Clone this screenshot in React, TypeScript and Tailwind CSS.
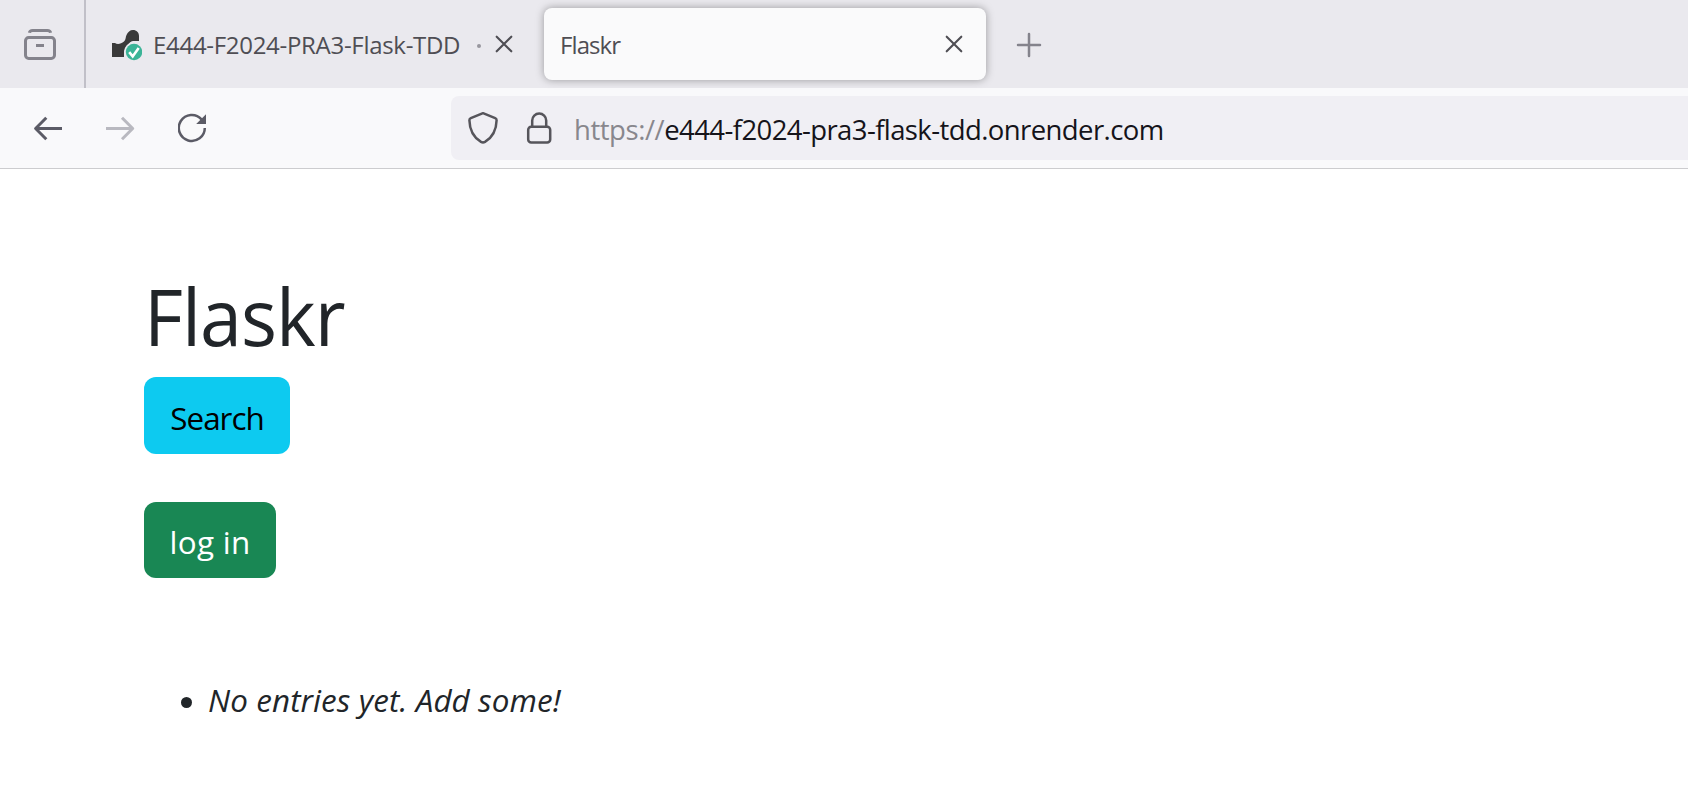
import type { ReactNode } from "react";

const FONT = "font-['Open_Sans','Noto_Sans',sans-serif]";

function Icon({ className, size, children }: { className: string; size: number; children: ReactNode }) {
  return (
    <svg
      className={`shrink-0 ${className}`}
      width={size}
      height={size}
      viewBox={`0 0 ${size} ${size}`}
      fill="none"
      stroke="currentColor"
      strokeWidth="3"
      strokeLinecap="round"
      strokeLinejoin="round"
    >
      {children}
    </svg>
  );
}

function CloseIcon({ className }: { className: string }) {
  return (
    <Icon size={20} className={className}>
      <path strokeWidth="2.1" d="M2.700 2.700l14.600 14.600M17.300 2.700L2.700 17.300" />
    </Icon>
  );
}

function TabBar() {
  return (
    <div className="flex h-[88px] bg-[#eae9ee] text-[24px] leading-8 text-[#4f4e54]">
      <div className="flex h-full w-[86px] shrink-0 border-r-2 border-[#c1c0c8] pt-[26px] pl-[22px]">
        <Icon size={36} className="text-[#84838c]">
          <path d="M7.400 6.800c.3-1.700 1.500-2.300 3.200-2.300h14.800c1.700 0 2.900.6 3.200 2.300" strokeLinecap="butt" />
          <rect x="3.500" y="11.500" width="29" height="21" rx="3.200" />
          <path d="M14 19.500h8" strokeLinecap="butt" />
        </Icon>
      </div>
      <div className="flex h-full w-[458px] shrink-0 pl-[26px]">
        <svg className="mt-[30px] shrink-0" width="30" height="31" viewBox="0 0 30 31">
          <path
            fill="#3a3a3a"
            d="M0 13h3c2 1.500 6 1.200 9-1.500 2-2 1.500-4.500 2.500-6.500C15.800 2 18 0 21 0c3.500 0 6 2.500 6 6v5h-6c-2.500.3-4.500 2.500-6 5-1.500 2.500-3 4-3 6.500V27H0z"
          />
          <circle cx="22" cy="22" r="10" fill="#eae9ee" />
          <circle cx="22" cy="22" r="8.200" fill="#3bb497" />
          <path d="M17.200 22.200l3.500 4.200 6-8.400" fill="none" stroke="#fff" strokeWidth="2.600" />
        </svg>
        <span className="mt-[29px] ml-[11px] w-[308px] shrink-0 whitespace-nowrap tracking-[-0.3px]">
          E444-F2024-PRA3-Flask-TDD
        </span>
        <span className="mt-[44px] ml-[16px] size-[4px] shrink-0 rounded-full bg-[#98979e]" />
        <CloseIcon className="mt-[34px] ml-[13px]" />
      </div>
      <div className="mt-2 flex h-[72px] w-[442px] shrink-0 rounded-[8px] bg-[#fafafb] pl-[16px] shadow-[0_0_8px_rgba(0,0,0,0.35)]">
        <span className="mt-[21px] w-[384px] tracking-[-0.9px]">Flaskr</span>
        <CloseIcon className="mt-[26px]" />
      </div>
      <Icon size={26} className="mt-[32px] ml-[30px] text-[#84838c]">
        <path strokeWidth="2.500" d="M13 2v22M2 13h22" />
      </Icon>
    </div>
  );
}

function Toolbar() {
  return (
    <div className="flex h-[81px] border-b border-[#cccccf] bg-[#f9f9fb] text-[#5b5b66]">
      <Icon size={30} className="mt-[25px] ml-[33px]">
        <path d="M29 15.500H2.500M13.300 4.700L2.600 15.500l10.700 10.800" strokeLinecap="butt" />
      </Icon>
      <Icon size={30} className="mt-[25px] ml-[42px] text-[#b9b9c0]">
        <path d="M1 15.500h26.500M17 4.700l10.700 10.800L17 26.300" strokeLinecap="butt" />
      </Icon>
      <Icon size={30} className="mt-[25px] ml-[43px]">
        <path strokeWidth="2.500" strokeLinecap="butt" d="M26.800 15A13 13 0 1 1 23.500 6.300" />
        <path d="M28 1.200V11H18.200z" fill="currentColor" stroke="none" />
      </Icon>
      <div className="mt-2 ml-[243px] flex h-16 flex-1 rounded-l-[8px] bg-[#f0eff4] text-[#56555b]">
        <Icon size={32} className="mt-[16px] ml-[16px]">
          <path
            strokeWidth="2.500"
            d="M16 1.200l12.200 4.900c1 .4 1.400 1 1.400 2.100-.2 9.600-4.400 17.300-11.600 21.700-1.400.8-2.600.8-4 0C6.800 25.500 2.600 17.800 2.400 8.200c0-1.100.4-1.700 1.400-2.100z"
          />
        </Icon>
        <Icon size={32} className="mt-[16px] ml-[24px]">
          <path strokeWidth="2.500" d="M9.200 14.500V8.500a7 7 0 0 1 14 0v6" />
          <rect strokeWidth="2.500" x="5.200" y="14.700" width="22" height="15.900" rx="3" />
        </Icon>
        <span className="mt-[14px] ml-[19px] text-[27.500px] leading-10 whitespace-nowrap text-[#15141a]">
          <span className="tracking-[-0.45px] text-[#88878d]">https://</span>
          <span className="tracking-[-0.59px]">e444-f2024-pra3-flask-tdd.onrender.com</span>
        </span>
      </div>
    </div>
  );
}

export default function App() {
  return (
    <div className={`h-[792px] w-full overflow-hidden bg-white text-[#212529] ${FONT}`}>
      <TabBar />
      <Toolbar />
      <main className="flex flex-col items-start pt-[99px] pl-[144px]">
        <h1 className="origin-left scale-x-[0.963] text-[78.4px] leading-[96px] tracking-[-1px]">Flaskr</h1>
        <button className="mt-[13px] h-[77px] w-[146px] rounded-[12px] bg-[#0dcaf0] pt-[4px] text-[31.4px] leading-[48px] tracking-[-1px] text-black">
          Search
        </button>
        <button className="mt-[48px] h-[76px] w-[132px] rounded-[12px] bg-[#198754] pt-[4px] text-[31.4px] leading-[48px] tracking-[0.3px] text-white">
          log in
        </button>
        <ul className="mt-[98px] flex pl-[37px] text-[31.4px] leading-[48px]">
          <li className="flex">
            <span className="mt-[21px] mr-[16px] size-[11px] rounded-full bg-[#212529]" />
            <em className="tracking-[0.1px]">No entries yet. Add some!</em>
          </li>
        </ul>
      </main>
    </div>
  );
}
